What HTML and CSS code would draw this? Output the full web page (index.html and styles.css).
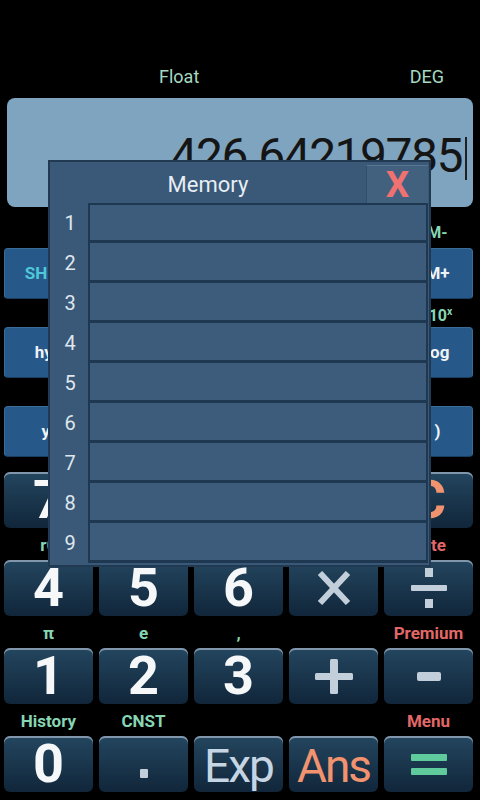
FILE: index.html
```html
<!DOCTYPE html>
<html lang="en">
<head>
  <meta charset="UTF-8" />
  <title>Calculator</title>
  <link rel="stylesheet" href="styles.css">
</head>
<body>

<div class="calc">
  <div class="status">
    <span class="mode">Float</span>
    <span class="angle">DEG</span>
  </div>

  <div class="display">
    <span class="value">426.64219785</span>
    <span class="cursor"></span>
  </div>

  <!-- function keys -->
  <div class="tags tags-tall tags-small">
    <span></span><span></span><span></span><span></span><span class="tag-end">M-</span>
  </div>
  <div class="pad fn">
    <div class="key shift">SHIFT</div>
    <div class="key">RCL</div>
    <div class="key">STO</div>
    <div class="key">MC</div>
    <div class="key key-end">M+</div>
  </div>
  <div class="tags tags-short tags-small">
    <span></span><span></span><span></span><span></span><span class="tag-end tag-pow">10<sup>x</sup></span>
  </div>
  <div class="pad fn">
    <div class="key">hyp</div>
    <div class="key">sin</div>
    <div class="key">cos</div>
    <div class="key">tan</div>
    <div class="key key-end">log</div>
  </div>
  <div class="tags tags-short tags-small">
    <span></span><span></span><span></span><span></span><span></span>
  </div>
  <div class="pad fn">
    <div class="key">y<sup>x</sup></div>
    <div class="key">√</div>
    <div class="key">x²</div>
    <div class="key">(</div>
    <div class="key key-end">)</div>
  </div>
  <div class="spacer"></div>

  <!-- number keys -->
  <div class="pad num">
    <div class="key">7</div>
    <div class="key">8</div>
    <div class="key">9</div>
    <div class="key key-word">DEL</div>
    <div class="key key-clear">C</div>
  </div>
  <div class="tags">
    <span>rθ</span><span></span><span></span><span></span><span class="red tag-del">Delete</span>
  </div>
  <div class="pad num">
    <div class="key">4</div>
    <div class="key">5</div>
    <div class="key">6</div>
    <div class="key">
      <svg width="34" height="34" viewBox="0 0 34 34"><path d="M3 2 L31 32 M31 2 L3 32" stroke="#c2cfdb" stroke-width="6"/></svg>
    </div>
    <div class="key">
      <svg width="36" height="40" viewBox="0 0 36 40" fill="#c2cfdb"><rect x="14" y="0" width="8" height="9"/><rect x="0" y="17" width="36" height="6" rx="1"/><rect x="14" y="31" width="8" height="9"/></svg>
    </div>
  </div>
  <div class="tags">
    <span>π</span><span>e</span><span>,</span><span></span><span class="red">Premium</span>
  </div>
  <div class="pad num">
    <div class="key">1</div>
    <div class="key">2</div>
    <div class="key">3</div>
    <div class="key">
      <svg width="38" height="35" viewBox="0 0 38 35" fill="#c2cfdb"><rect x="0" y="14" width="38" height="7" rx="1.5"/><rect x="15" y="0" width="8" height="35" rx="1.5"/></svg>
    </div>
    <div class="key">
      <svg width="24" height="9" viewBox="0 0 24 9" fill="#c2cfdb"><rect x="0" y="0" width="24" height="9" rx="2"/></svg>
    </div>
  </div>
  <div class="tags">
    <span>History</span><span>CNST</span><span></span><span></span><span class="red">Menu</span>
  </div>
  <div class="pad num">
    <div class="key">0</div>
    <div class="key">
      <svg class="dot" width="8" height="9" viewBox="0 0 8 9" fill="#c2cfdb"><rect width="8" height="9" rx="1"/></svg>
    </div>
    <div class="key key-exp">Exp</div>
    <div class="key key-ans">Ans</div>
    <div class="key">
      <svg width="36" height="21" viewBox="0 0 36 21" fill="#5fcb9d"><rect x="0" y="0" width="36" height="7" rx="1"/><rect x="0" y="14" width="36" height="7" rx="1"/></svg>
    </div>
  </div>

  <!-- memory popup -->
  <div class="memory">
    <div class="memory-head">
      <div class="memory-title">Memory</div>
      <div class="memory-close">X</div>
    </div>
    <div class="memory-list">
      <div class="slot-row"><span class="slot-num">1</span><div class="slot"></div></div>
      <div class="slot-row"><span class="slot-num">2</span><div class="slot"></div></div>
      <div class="slot-row"><span class="slot-num">3</span><div class="slot"></div></div>
      <div class="slot-row"><span class="slot-num">4</span><div class="slot"></div></div>
      <div class="slot-row"><span class="slot-num">5</span><div class="slot"></div></div>
      <div class="slot-row"><span class="slot-num">6</span><div class="slot"></div></div>
      <div class="slot-row"><span class="slot-num">7</span><div class="slot"></div></div>
      <div class="slot-row"><span class="slot-num">8</span><div class="slot"></div></div>
      <div class="slot-row"><span class="slot-num">9</span><div class="slot"></div></div>
    </div>
  </div>
</div>

</body>
</html>
```

FILE: styles.css
```css
:root {
  --default-font: Roboto, 'Liberation Sans', sans-serif;
  --green: #86d6b3;
  --red: #e26868;
  --salmon: #f2936f;
  --symbol: #c2cfdb;
  --dialog-bg: #3a5877;
  --dialog-line: #1f3851;
}
body {
  margin: 0;
  background: #000;
  font-family: var(--default-font);
}
.calc {
  position: relative;
  width: 480px;
  height: 800px;
  overflow: hidden;
}
.status {
  height: 98px;
  box-sizing: border-box;
  padding-bottom: 11px;
  display: flex;
  align-items: flex-end;
  font-size: 18px;
  color: #a6d9c1;
}
.mode {
  margin-left: 159px;
}
.angle {
  margin-left: auto;
  margin-right: 36px;
}
.display {
  height: 109px;
  margin: 0 7px;
  box-sizing: border-box;
  padding: 34px 6px 0 0;
  display: flex;
  justify-content: flex-end;
  align-items: flex-start;
  background: #7fa4c0;
  border-radius: 8px;
}
.value {
  font-size: 48px;
  line-height: 48px;
  letter-spacing: -1.5px;
  color: #151515;
}
.cursor {
  width: 2px;
  height: 43px;
  margin: 5px 0 0 3px;
  background: #202020;
}

/* key grid, shared by every row */
.pad, .tags {
  display: grid;
  grid-template-columns: repeat(5, 89px);
  column-gap: 6px;
  padding-left: 4px;
}
.key {
  display: flex;
  align-items: center;
  justify-content: center;
  box-sizing: border-box;
  line-height: 1;
}
.fn .key {
  height: 51px;
  background: #26598a;
  border: 1px solid #3a6c98;
  border-bottom-color: #1a3e60;
  border-radius: 4px;
  font-size: 17px;
  font-weight: bold;
  color: #eef3f7;
}
.fn .key-end {
  padding-left: 18px;
}
.fn .shift {
  color: #4fc8d8;
}
.fn sup, .tags sup {
  font-size: 0.65em;
  vertical-align: 6px;
}
.spacer {
  height: 15px;
}
.num .key {
  height: 56px;
  background: linear-gradient(#23465f, #11263a);
  box-shadow: inset 0 2px 0 #8196aa;
  border-radius: 6px;
  font-size: 54px;
  font-weight: bold;
  color: #f5f7f9;
}
.num .key-word {
  font-size: 22px;
}
.num .key-clear {
  color: var(--salmon);
}
.num .key-exp, .num .key-ans {
  font-size: 46px;
  font-weight: normal;
  letter-spacing: -2px;
  padding-top: 4px;
}
.num .key-exp {
  color: #c6d5e3;
}
.num .key-ans {
  color: var(--salmon);
}
.dot {
  margin-top: 18px;
}

/* secondary labels between the rows */
.tags {
  height: 32px;
  align-items: center;
  padding-top: 2px;
  box-sizing: border-box;
  font-size: 17px;
  font-weight: bold;
  text-align: center;
  color: var(--green);
}
.tags span {
  line-height: 20px;
}
.tags .red {
  color: var(--red);
}
.tags-small {
  font-size: 16px;
}
.tags-tall {
  height: 41px;
  align-items: end;
  padding-bottom: 5px;
}
.tags-short {
  height: 28px;
}
.tag-end {
  padding-left: 18px;
}
.tags .tag-pow {
  padding-left: 24px;
}
.tags .tag-del {
  padding-right: 14px;
}

/* memory popup */
.memory {
  position: absolute;
  left: 48px;
  top: 160px;
  width: 383px;
  height: 407px;
  box-sizing: border-box;
  border: 2px solid #213a51;
  background: var(--dialog-bg);
  display: flex;
  flex-direction: column;
}
.memory-head {
  height: 41px;
  display: flex;
}
.memory-title {
  flex: 1;
  padding-top: 4px;
  line-height: 37px;
  text-align: center;
  font-size: 22px;
  color: #e7eef4;
}
.memory-close {
  width: 62px;
  height: 38px;
  margin: 3px 1px 0 0;
  box-sizing: border-box;
  background: #42617f;
  border-top: 1px solid #58768f;
  border-left: 1px solid #324e68;
  text-align: center;
  font-size: 37px;
  line-height: 38px;
  font-weight: bold;
  color: #f07171;
}
.slot-row {
  display: flex;
  height: 40px;
}
.slot-num {
  width: 38px;
  padding-left: 2px;
  box-sizing: border-box;
  text-align: center;
  line-height: 40px;
  font-size: 20px;
  color: #dfe7ee;
}
.slot {
  flex: 1;
  margin-right: 1px;
  background: #3d5c7b;
  border: 2px solid var(--dialog-line);
  border-top: none;
  border-bottom-width: 3px;
}
.slot-row:first-child .slot {
  border-top: 2px solid var(--dialog-line);
}
```
